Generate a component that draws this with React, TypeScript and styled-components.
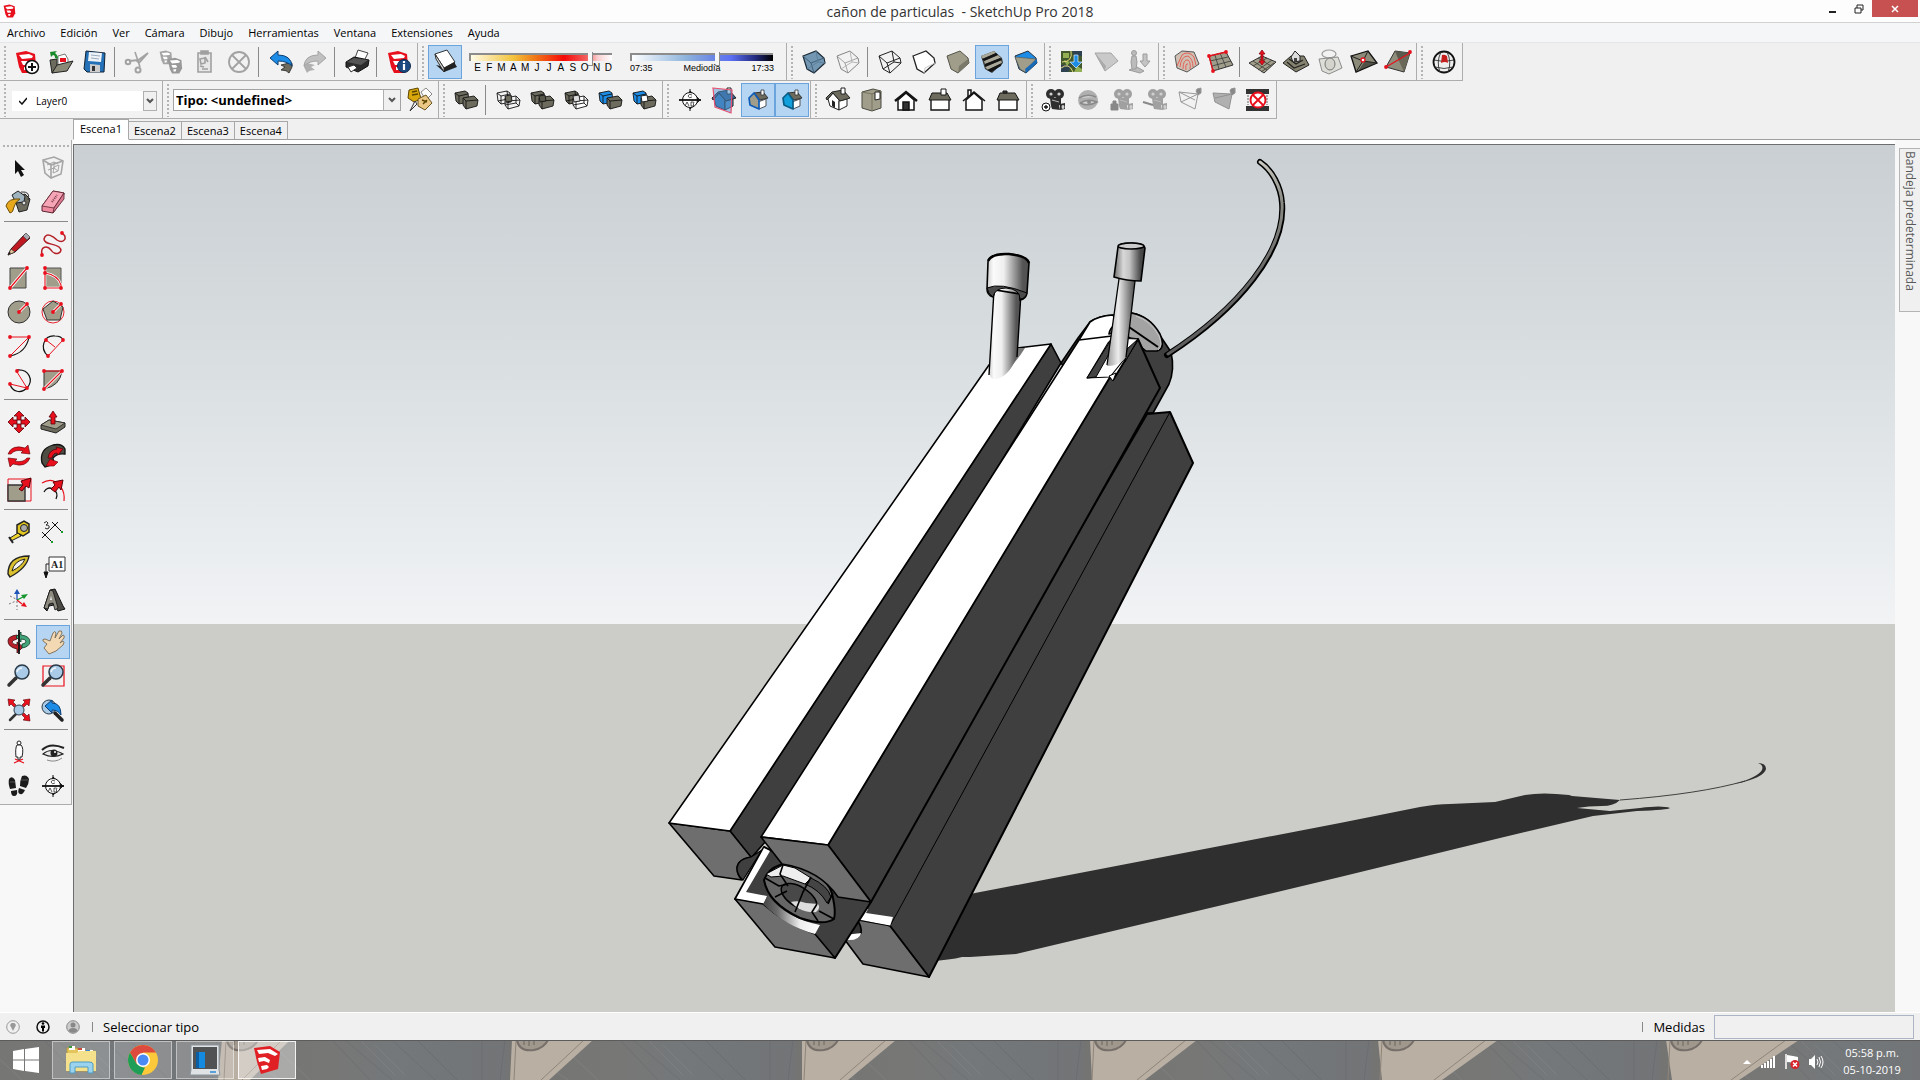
import React from 'react';
import styled, { createGlobalStyle } from 'styled-components';

const UI_FONT = '"Open Sans", "Noto Sans", sans-serif';
const SMALL_FONT = '"Liberation Sans", Arial, sans-serif';
const RED = '#e8101c';
const TAUPE = '#a09e8b';
const OLIVE = '#6c6b5d';
const BLUE = '#1c8ce6';
const INK = '#141414';

const GlobalStyle = createGlobalStyle`
  *, *::before, *::after { box-sizing: border-box; }
  body { margin: 0; background: #f0f0f0; }
  button, input, select { font: inherit; color: inherit; margin: 0; }
`;

const Window = styled.div`
  display: flex;
  flex-direction: column;
  height: 100vh;
  min-height: 960px;
  background: #f0f0f0;
  color: #000;
  font-family: ${UI_FONT};
  font-size: 11px;
`;

/* ---------- title bar and menu ---------- */

const TitleBar = styled.header`
  display: grid;
  grid-template-columns: 1fr auto 1fr;
  align-items: center;
  height: 23px;
  flex: none;
  background: #fdfdfd;
  border-bottom: 1px solid #d2d2d2;
`;

const AppMark = styled.span`
  display: flex;
  padding-left: 3px;
`;

const Title = styled.h1`
  margin: 0;
  padding-top: 2px;
  font-size: 14px;
  line-height: 20px;
  font-weight: 400;
  color: #333;
  white-space: pre;
`;

const WindowControls = styled.div`
  display: flex;
  justify-content: flex-end;
  align-self: start;
  padding-right: 2px;
`;

const WindowButton = styled.button<{ $close?: boolean }>`
  display: flex;
  align-items: center;
  justify-content: center;
  width: ${(p) => (p.$close ? 46 : 26)}px;
  height: 17px;
  padding: 0;
  border: 0;
  color: ${(p) => (p.$close ? '#fff' : '#222')};
  background: ${(p) => (p.$close ? '#c75050' : 'transparent')};
`;

const MenuBar = styled.nav`
  display: flex;
  gap: 1px;
  flex: none;
  height: 20px;
  background: #f4f6f8;
  border-bottom: 1px solid #e6e6e8;
`;

const MenuItem = styled.button`
  padding: 0 7px;
  border: 0;
  background: none;
  line-height: 19px;
`;

/* ---------- toolbars ---------- */

const ToolbarRow = styled.div`
  display: flex;
  flex: none;
  height: 38px;
`;

const Group = styled.div`
  display: flex;
  align-items: flex-start;
  padding: 2px 1px 1px 0;
  border-right: 1px solid #adadad;
  border-bottom: 1px solid #adadad;
  background: #f2f2f2;
`;

const Grip = styled.span`
  align-self: stretch;
  width: 10px;
  background: radial-gradient(circle, #b4b4b4 0 1px, transparent 1px) 3px 0 / 4px 4px repeat-y;
`;

const Divider = styled.span`
  width: 8px;
  height: 30px;
  margin-top: 2px;
  background: linear-gradient(#8a8a8a, #8a8a8a) 2px 0 / 1px 100% no-repeat;
`;

const ToolButton = styled.button<{ $on?: boolean }>`
  display: flex;
  align-items: center;
  justify-content: center;
  width: 34px;
  height: 34px;
  padding: 0;
  border: 1px solid ${(p) => (p.$on ? '#6ba3dc' : 'transparent')};
  background: ${(p) => (p.$on ? '#b5d5f3' : 'transparent')};
`;

const SliderSet = styled.div`
  display: flex;
  gap: 17px;
  padding: 6px 11px 0 7px;
`;

const SliderField = styled.div`
  display: flex;
  flex-direction: column;
  width: 144px;
  font-family: ${SMALL_FONT};
  font-size: 9px;
  line-height: 10px;
`;

const Range = styled.input<{ $track: string }>`
  appearance: none;
  display: block;
  width: 143px;
  height: 12px;
  background: none;
  &::-webkit-slider-runnable-track {
    height: 8px;
    border-top: 2px solid #8c8c8c;
    border-left: 2px solid #8c8c8c;
    background: ${(p) => p.$track};
  }
  &::-webkit-slider-thumb {
    appearance: none;
    width: 5px;
    height: 14px;
    margin-top: -3px;
    background: #f7f7f7;
    border-right: 1px solid #8c8c8c;
    border-bottom: 1px solid #8c8c8c;
  }
`;

const Scale = styled.span<{ $months?: boolean }>`
  display: flex;
  justify-content: space-between;
  padding-left: ${(p) => (p.$months ? 4 : 0)}px;
  font-size: ${(p) => (p.$months ? 10 : 9)}px;
`;

const ScaleMark = styled.span`
  min-width: 9px;
  text-align: center;
`;

const LayerCombo = styled.label`
  display: flex;
  align-items: center;
  width: 145px;
  height: 20px;
  margin: 8px 4px 0 2px;
  background: #fff;
  font-size: 10px;
`;

const CheckMark = styled.svg`
  width: 8px;
  height: 8px;
  margin: 0 7px;
`;

const TypeCombo = styled.label`
  display: flex;
  width: 228px;
  height: 22px;
  margin: 6px 2px 0 0;
  border: 1px solid #a3a3a3;
  background: #fff;
  font-size: 13px;
  font-weight: 700;
`;

const ComboSelect = styled.select`
  appearance: none;
  flex: 1;
  min-width: 0;
  height: 100%;
  padding: 0 2px;
  border: 0;
  background: none;
`;

const ComboArrow = styled.span<{ $wide?: boolean }>`
  display: flex;
  align-items: center;
  justify-content: center;
  width: ${(p) => (p.$wide ? 17 : 14)}px;
  height: 100%;
  background: #f0f0f0;
  border: ${(p) => (p.$wide ? '0' : '1px solid #b0b0b0')};
  border-left: 1px solid #b0b0b0;
`;

/* ---------- scene tabs ---------- */

const SceneTabs = styled.div`
  display: flex;
  align-items: flex-end;
  flex: none;
  height: 21px;
  padding-left: 73px;
  background: linear-gradient(#a0a0a0, #a0a0a0) 73px 20px / 100% 1px no-repeat #f0f0f0;
`;

const SceneTab = styled.button<{ $active?: boolean }>`
  height: ${(p) => (p.$active ? 21 : 19)}px;
  padding: ${(p) => (p.$active ? '0 6px 2px' : '0 5px')};
  border: 1px solid #a8a8a8;
  border-left-width: ${(p) => (p.$active ? 1 : 0)}px;
  border-bottom-color: ${(p) => (p.$active ? '#fff' : '#a0a0a0')};
  background: ${(p) => (p.$active ? '#fff' : '#f0f0f0')};
  line-height: 16px;
`;

/* ---------- body ---------- */

const Body = styled.div`
  display: flex;
  flex: 1;
  min-height: 0;
`;

const LeftColumn = styled.aside`
  flex: none;
  width: 73px;
  background: #f8f8f8;
`;

const Palette = styled.div`
  display: grid;
  grid-template-columns: 34px 34px;
  width: 72px;
  padding: 1px 0 1px 2px;
  background: #f2f2f2;
  border-right: 1px solid #adadad;
  border-bottom: 1px solid #adadad;
`;

const PaletteGrip = styled.span`
  grid-column: 1 / -1;
  height: 10px;
  background: radial-gradient(circle, #b4b4b4 0 1px, transparent 1px) 0 3px / 4px 4px repeat-x;
`;

const PaletteDivider = styled.span`
  grid-column: 1 / -1;
  height: 8px;
  margin: 0 2px;
  background: linear-gradient(#8a8a8a, #8a8a8a) 0 2px / 100% 1px no-repeat;
`;

const Viewport = styled.main`
  display: flex;
  flex: 1;
  min-width: 0;
  border-top: 4px solid #fff;
`;

const Scene = styled.svg`
  flex: 1;
  min-width: 0;
  height: 100%;
  border-top: 1px solid #6e6e6e;
  border-left: 1px solid #6e6e6e;
`;

const RightColumn = styled.aside`
  flex: none;
  width: 25px;
  padding: 8px 0 0 4px;
  background: #f8f8f8;
`;

const TrayTab = styled.button`
  display: flex;
  align-items: center;
  width: 21px;
  height: 164px;
  padding: 2px 0;
  border: 1px solid #b4b4b4;
  border-right: 0;
  background: #f0f0f0;
  writing-mode: vertical-rl;
  font-size: 12px;
  line-height: 17px;
  color: #5a5a5a;
`;

/* ---------- status bar ---------- */

const StatusBar = styled.footer`
  display: flex;
  align-items: center;
  flex: none;
  height: 28px;
  padding: 0 6px;
  border-top: 1px solid #fff;
  background: #f0f0f0;
  font-size: 13px;
`;

const StatusButtons = styled.div`
  display: flex;
  gap: 16px;
  margin-right: 12px;
`;

const StatusButton = styled.button`
  display: flex;
  padding: 0;
  border: 0;
  background: none;
`;

const StatusDivider = styled.span`
  width: 1px;
  height: 10px;
  margin-right: 10px;
  background: #888;
`;

const Hint = styled.span`
  flex: 1;
`;

const Measure = styled.label`
  display: flex;
  align-items: center;
  gap: 9px;
`;

const MeasureInput = styled.input`
  width: 200px;
  height: 24px;
  padding: 0 4px;
  border: 1px solid #abb5c6;
  background: #f0f0f0;
`;

/* ---------- taskbar ---------- */

const Taskbar = styled.div`
  position: relative;
  display: flex;
  flex: none;
  height: 40px;
  background: #737476;
  overflow: hidden;
`;

const TaskbarBackdrop = styled.svg`
  position: absolute;
  inset: 0;
  width: 100%;
  height: 40px;
`;

const StartButton = styled.button`
  position: relative;
  display: flex;
  align-items: center;
  justify-content: center;
  width: 52px;
  padding: 0;
  border: 0;
  background: none;
`;

const TaskList = styled.div`
  position: relative;
  display: flex;
  flex: 1;
  gap: 4px;
  padding: 1px 0;
`;

const TaskButton = styled.button<{ $active?: boolean }>`
  display: flex;
  align-items: center;
  justify-content: center;
  width: 58px;
  height: 38px;
  padding: 0;
  border: 1px solid ${(p) => (p.$active ? 'rgba(255,255,255,.85)' : 'rgba(255,255,255,.45)')};
  background: ${(p) => (p.$active ? 'rgba(255,255,255,.38)' : 'rgba(255,255,255,.18)')};
`;

const Tray = styled.div`
  position: relative;
  display: flex;
  align-items: center;
  gap: 8px;
  padding-top: 3px;
`;

const TrayButton = styled.button`
  display: flex;
  padding: 0;
  border: 0;
  background: none;
`;

const Clock = styled.time`
  position: relative;
  width: 96px;
  padding-top: 4px;
  color: #fff;
  text-align: center;
  line-height: 17px;
`;

/* ---------- icons ---------- */

const Glyph = styled.svg<{ $size?: number }>`
  display: block;
  width: ${(p) => p.$size ?? 24}px;
  height: ${(p) => p.$size ?? 24}px;
  overflow: visible;
`;

const CUBE = 'M1 6 14 1 22 8 23 13 12 23 5 19Z';
const CUBE_EDGES = 'M1 6 9 13 22 8M9 13 12 23';
const HIDDEN_EDGES = 'M14 1 16 12 5 19M16 12 23 13';

const LogoMark = ({ red = RED }: { red?: string }) => (
  <g>
    <path d="M1 3 11 1 20 4 21 16 17 23 7 23 4 17Z" fill={red} />
    <path d="M4 5 14 4 18 6 17 8 7 9ZM6 11 12 11 14 13 13 15 8 15ZM9 17 13 17 12 20 9 20Z" fill="#fff" />
  </g>
);

const Solids = ({ a, b, wire, mid }: { a: string; b: string; wire?: boolean; mid?: string }) => (
  <g stroke={INK} strokeWidth=".9" strokeLinejoin="round">
    <path d="M1 5 11 3 14 5 15 14 5 16 2 13Z" fill={a} />
    <path d="M1 5 5 8 14 6M5 8V16" fill="none" />
    <path d="M9 10 20 8 24 12 23 18 12 21 9 17Z" fill={b} />
    <path d="M9 10 12 13 24 12M12 13V21" fill="none" />
    {wire && <path d="M20 8V15L9 17M20 15 23 18M11 3 12 11 2 13" fill="none" />}
    {mid && <path d="M9 8 15 7 16 13 10 14Z" fill={mid} />}
  </g>
);

const HouseIso = ({ wall, roof = OLIVE, front = '#fff', edge = '#222' }: { wall: string; roof?: string; front?: string; edge?: string }) => (
  <g stroke={edge} strokeWidth="1" strokeLinejoin="round">
    <path d="M2 11 7 5 13 12V22L4 18Z" fill={wall} />
    <path d="M13 13 21 11V18L13 22Z" fill={front} />
    <path d="M6 4 17 2 24 10 14 13 7 5 1 12 0 10Z" fill={roof} />
    <path d="M15 0H19V6L15 6Z" fill="#fff" />
  </g>
);

const HouseSection = ({ wall, outline }: { wall: string; outline: string }) => (
  <g strokeLinejoin="round">
    <path d="M12 14 20 11V18L13 21Z" fill="#fff" stroke="#555" />
    <path d="M8 5 17 4 22 10 14 12Z" fill={OLIVE} stroke="#333" />
    <path d="M15 2H18V7L15 7Z" fill="#fff" stroke="#333" strokeWidth=".8" />
    <path d="M3 10 8 5 13 12V21L4 17Z" fill={wall} stroke={outline} strokeWidth="1.700" />
  </g>
);

const Film = ({ c }: { c: string }) => (
  <g fill={c}>
    <circle cx="9" cy="6" r="5" />
    <circle cx="17" cy="6" r="5" />
    <path d="M8 10 19 10 19 17 9 18ZM9 18 17 17 18 22 10 21ZM18 16 23 15V21L18 22Z" />
    <g fill="#cfcfcf">
      <circle cx="9" cy="6" r="1.600" />
      <circle cx="17" cy="6" r="1.600" />
      <ellipse cx="21" cy="19" rx="1.500" ry="2" />
    </g>
    <path d="M10 12 17 14" stroke="#bbb" />
  </g>
);

const Lens = () => (
  <g>
    <path d="M9 14 2 21" stroke="#333" strokeWidth="3.500" strokeLinecap="round" />
    <circle cx="15" cy="8" r="7" fill="#a9cbe8" stroke="#2b3a48" strokeWidth="1.500" />
    <path d="M10 8Q11 4 15 4" stroke="#eef6fc" strokeWidth="1.500" fill="none" />
  </g>
);

const SectionMark = () => (
  <g stroke="#111" fill="#fff">
    <path d="M12 1V23M22 12 12 3V21Z" fill="#111" />
    <circle cx="12" cy="12" r="7.500" />
    <path d="M1 12H23" strokeWidth="1.800" />
    <path d="M14 7Q11 5 10 8 11 11 14 9M7 18 9 14 11 18M13 14V18H15Q17 17 15 16 17 14 15 14Z" fill="none" strokeWidth=".7" />
  </g>
);

const Handles = ({ at }: { at: [number, number][] }) => (
  <g fill={RED}>
    {at.map(([x, y]) => (
      <circle key={`${x}-${y}`} cx={x} cy={y} r="1.900" />
    ))}
  </g>
);

const icons: Record<string, React.ReactNode> = {
  create: (
    <>
      <LogoMark />
      <circle cx="17" cy="17" r="6.500" fill="#fff" stroke="#111" strokeWidth="1.500" />
      <path d="M17 13V21M13 17H21" stroke="#111" strokeWidth="2" />
    </>
  ),
  open: (
    <>
      <path d="M9 6 16 4 19 9V16H9Z" fill="#fff" stroke="#777" />
      <path d="M11 8H17V12H11Z" fill={RED} />
      <path d="M1 10 8 9V21L3 23Z" fill={OLIVE} stroke="#222" />
      <path d="M3 23 8 15 24 11 18 21Z" fill="#8a8978" stroke="#222" />
      <path d="M1 2 8 1 6 3Q9 5 9 9L6 8Q6 5 4 5L2 7Z" fill="#188a2a" />
    </>
  ),
  save: (
    <>
      <path d="M3 1 22 3 21 22 4 22 1 19Z" fill="#2471b8" stroke="#123" />
      <path d="M6 2 19 3 18 12 5 11Z" fill="#eef3f8" />
      <path d="M7 14 17 15V22H7Z" fill="#ccc" />
      <path d="M9 16H12V21H9Z" fill="#333" />
      <path d="M8 5 17 6M8 8 16 9" stroke="#9ab" />
    </>
  ),
  cut: (
    <g stroke="#a2a2a2" strokeWidth="2" fill="none">
      <path d="M12 11 23 3 14 13ZM10 2 15 17" strokeWidth="1.600" fill="#bbb" />
      <path d="M4 11 14 10" />
      <circle cx="3" cy="12" r="2.300" />
      <circle cx="13" cy="20" r="2.500" />
    </g>
  ),
  copy: (
    <>
      <g transform="scale(.62)">
        <LogoMark red="#a4a4a4" />
      </g>
      <g transform="translate(8 7) scale(.72)">
        <LogoMark red="#999" />
      </g>
    </>
  ),
  paste: (
    <g fill="none" stroke="#a0a0a0" strokeWidth="1.600">
      <path d="M5 3H18V22H5Z" fill="#e8e8e8" />
      <path d="M8 1H15V4H8Z" fill="#a0a0a0" />
      <path d="M7 9 12 8V13L8 14ZM7 16 11 17M9 19H15" />
      <path d="M12 7 15 12" />
    </g>
  ),
  remove: (
    <g fill="none" stroke="#a2a2a2" strokeWidth="1.800">
      <circle cx="12" cy="12" r="10" />
      <path d="M5 5 19 19M19 5 5 19" />
    </g>
  ),
  undo: (
    <>
      <path d="M12 15 20 13Q24 11 23 17L20 23Q18 20 12 20L16 17Z" fill={OLIVE} stroke="#222" strokeWidth=".8" />
      <path d="M1 8 9 1V5Q22 5 23 16Q18 11 9 11V15Z" fill={BLUE} stroke="#0d3f73" />
    </>
  ),
  redo: (
    <>
      <path d="M12 15 4 13Q0 11 1 17L4 23Q6 20 12 20L8 17Z" fill="#b0b0b0" />
      <path d="M23 8 15 1V5Q2 5 1 16Q6 11 15 11V15Z" fill="#c0c0c0" stroke="#a4a4a4" />
    </>
  ),
  print: (
    <>
      <path d="M10 8 13 0 23 3 19 11Z" fill="#fff" stroke="#444" />
      <path d="M1 12 9 7 24 10 23 16 13 22 1 17Z" fill="#2c2c2c" stroke="#111" />
      <path d="M2 12 9 8 23 10 16 15Z" fill="#555" />
      <path d="M3 17 9 15 12 18 6 22Z" fill="#fff" stroke="#333" />
    </>
  ),
  info: (
    <>
      <LogoMark />
      <circle cx="17" cy="16" r="6.500" fill="#1c4a80" stroke="#102a4c" />
      <path d="M17 14V20M17 11V13" stroke="#fff" strokeWidth="2.200" />
    </>
  ),
  shadow: (
    <>
      <path d="M3 15 11 22 24 17 21 12 12 17Z" fill="#222" />
      <path d="M2 4 14 0 22 12 11 18Z" fill="#fff" stroke="#333" />
      <path d="M2 4 3 9 11 22V18Z" fill="#ddd" stroke="#333" />
      <path d="M11 18 22 12V15L11 22Z" fill="#222" />
    </>
  ),
  xray: (
    <g stroke="#1c2a36" strokeWidth="1.200" fill="none">
      <path d={CUBE} fill="#7397b2" />
      <path d={CUBE_EDGES} stroke="#41607a" strokeWidth="1" />
      <path d={HIDDEN_EDGES} stroke="#5c819c" strokeWidth="1" />
    </g>
  ),
  backEdges: (
    <g stroke="#b0b0b0" fill="none" strokeWidth=".9">
      <path d={CUBE} stroke="#777" />
      <path d={CUBE_EDGES} stroke="#999" />
      <path d={HIDDEN_EDGES} />
    </g>
  ),
  wireframe: (
    <g stroke="#222" fill="none">
      <path d={CUBE} />
      <path d={CUBE_EDGES} />
      <path d={HIDDEN_EDGES} />
    </g>
  ),
  hiddenLine: (
    <g stroke="#222" fill="none">
      <path d={CUBE} fill="#fff" strokeWidth="1.300" />
      <path d="M12 23 13 18 23 13" stroke="#ccc" />
    </g>
  ),
  shaded: (
    <>
      <path d={CUBE} fill={TAUPE} stroke="#55544a" />
      <path d="M12 23 13 16 22 9 23 13Z" fill="#7b796a" />
    </>
  ),
  textured: (
    <>
      <path d={CUBE} fill="#3a3a36" />
      <path d="M1 6 14 1 16 3 3 9ZM4 11 18 5 21 8 5 14ZM5 17 21 10 22 13 8 20Z" fill="#aaa898" />
      <path d="M2 9 16 3 18 5 4 11ZM5 14 20 8 22 10 5 17ZM7 20 22 13 21 16 11 22Z" fill={INK} />
    </>
  ),
  mono: (
    <>
      <path d={CUBE} fill={BLUE} stroke="#234" />
      <path d="M1 7 22 9 11 22 6 19Z" fill={TAUPE} stroke="#55544a" strokeWidth=".6" />
      <path d="M23 9V13L12 23 11 19Z" fill="#1a69b4" />
    </>
  ),
  geo: (
    <>
      <path d="M1 1H22V22H1Z" fill="#41592c" />
      <path d="M1 15H12L8 22H1ZM12 1H22V6H14Z" fill="#2e4150" />
      <path d="M3 3H9V8H3ZM4 10 10 12 7 16ZM17 16 22 19V22H14Z" fill="#93b055" />
      <path d="M1 18Q9 12 13 22M11 1Q13 12 2 12" stroke="#e8dc7c" fill="none" />
      <path d="M14 5H18V12H22L16 18 10 12H14Z" fill={BLUE} stroke="#dfefff" strokeWidth=".7" />
    </>
  ),
  terrain: (
    <>
      <path d="M1 3 17 3 24 11 11 21Z" fill="#c9c9c9" stroke="#a6a6a6" />
      <path d="M1 3 11 21 12 16Z" fill="#aaa" />
    </>
  ),
  photo: (
    <g fill="#bbb" stroke="#9c9c9c">
      <path d="M1 20 9 17 16 21 12 23Z" />
      <circle cx="6" cy="3" r="2.500" />
      <path d="M4 6H8L9 12 8 19H4L3 12Z" />
      <path d="M15 4H19V11H22L17 17 12 11H15Z" fill="#c4c4c4" />
    </g>
  ),
  contours: (
    <>
      <path d="M1 6 8 1 20 2 25 14 13 22 3 18Z" fill="#cfc0b4" stroke="#555" />
      <path d="M3 16 8 5Q14 0 20 7L22 15M6 17Q7 6 14 6Q19 9 19 17M9 19Q9 9 14 10Q17 12 16 19M12 20Q11 13 14 14" stroke="#e5564c" fill="none" strokeWidth=".9" />
    </>
  ),
  scratch: (
    <>
      <path d="M1 6 18 2 25 15 5 21Z" fill={TAUPE} stroke="#333" />
      <path d="M2 11 20 7M4 16 23 11M7 5 11 19M12 3 18 17" stroke="#444" strokeWidth=".9" />
      <path d="M5 21 1 6 18 2" stroke={RED} strokeWidth="1.300" fill="none" />
      <Handles at={[[1, 6], [18, 2], [5, 21]]} />
    </>
  ),
  smoove: (
    <>
      <path d="M-1 13 12 6 26 12 14 23Z" fill={TAUPE} stroke="#333" />
      <path d="M3 11 17 20M8 8 21 16M3 16 17 8M8 20 22 10M11 22 24 13" stroke="#3c3b34" strokeWidth=".8" />
      <path d="M12 0 15 4H13V11H15L12 15 9 11H11V4H9Z" fill={RED} stroke="#80000a" strokeWidth=".7" />
    </>
  ),
  stamp: (
    <>
      <path d="M-1 13 7 6 20 6 25 15 12 22Z" fill="#85836f" stroke="#222" />
      <path d="M3 12 10 18 21 14M5 9 12 14 19 10" stroke="#222" fill="none" strokeWidth="1.200" />
      <path d="M7 7 11 1 16 6V11L9 12Z" fill="#ddd" stroke="#222" />
      <path d="M10 8H13V11L10 12Z" fill="#444" />
    </>
  ),
  drape: (
    <g stroke="#8c8c8c">
      <path d="M1 9 20 7 24 18 11 24 4 21Z" fill="#deded8" />
      <ellipse cx="11" cy="4" rx="7" ry="4" fill="none" stroke="#999" strokeWidth="1.200" />
      <ellipse cx="12" cy="14" rx="5" ry="6" fill="#d4d4cd" stroke="#777" />
    </g>
  ),
  detail: (
    <>
      <path d="M-1 6 16 1 25 13 4 22Z" fill="#8c8a78" stroke="#111" strokeWidth="1.300" />
      <path d="M-1 6 11 11 16 1M25 13 11 11 4 22" stroke="#222" fill="none" />
      <path d="M13 11 25 13 6 21Z" fill="#2c2b26" opacity=".6" />
      <circle cx="11" cy="10" r="2" fill="#fff" stroke={RED} strokeWidth="1.300" />
    </>
  ),
  flip: (
    <>
      <path d="M9 1 24 3 18 22 0 17Z" fill="#8f8d7b" stroke="#333" />
      <path d="M9 1 24 3 13 11Z" fill="#5b5a4e" />
      <path d="M24 3 18 22 13 11Z" fill="#6a6859" />
      <path d="M0 17 24 3" stroke={RED} strokeWidth="1.200" />
      <Handles at={[[0, 17], [24, 2]]} />
    </>
  ),
  globe: (
    <>
      <circle cx="12" cy="12" r="10.500" fill="#eee" stroke="#111" strokeWidth="1.800" />
      <path d="M2 10Q12 13 22 10M3 17Q12 20 21 17M9 2Q4 12 8 22M15 2Q20 12 16 22" stroke="#333" fill="none" strokeWidth=".9" />
      <path d="M10 5Q12 4 15 6L16 13Q13 11 9 13Z" fill="#c71c1c" />
    </>
  ),
  tags: (
    <>
      <path d="M1 2 10 0 13 11 6 14 0 10Z" fill="#d8a80c" stroke="#5b4500" />
      <path d="M13 4 18 0 24 6 18 12Z" fill="#fff" stroke="#888" />
      <path d="M10 11 18 7 24 15 17 22 10 18Z" fill="#ecc886" stroke="#6a5420" />
      <path d="M4 4 9 3M4 7 10 6M14 12 19 14M15 16 19 12" stroke="#5b4500" strokeWidth="1.500" />
      <path d="M2 23 7 13 9 16Z" fill="#eee" stroke="#333" />
    </>
  ),
  shell: <Solids a={OLIVE} b={OLIVE} />,
  intersect: <Solids a="none" b="none" wire mid={OLIVE} />,
  union: <Solids a={OLIVE} b={OLIVE} mid="#57564b" />,
  subtract: <Solids a={OLIVE} b="#fff" wire mid="#ddd" />,
  trim: <Solids a={BLUE} b={OLIVE} />,
  split: <Solids a={BLUE} b={OLIVE} mid="#fff" />,
  section: <SectionMark />,
  sectionPlane: (
    <>
      <HouseIso wall="#3a76b5" roof="#345f8c" front="#5792c9" />
      <path d="M1 0 20 2 19 25 3 19Z" fill="#4a8fd0" fillOpacity=".5" stroke="#e85070" strokeWidth="1.200" />
    </>
  ),
  sectionCut: <HouseSection wall={TAUPE} outline="#0e5cb8" />,
  sectionFill: <HouseSection wall="#12a0dc" outline="#0b5c84" />,
  iso: (
    <>
      <HouseIso wall="#fff" />
      <path d="M6 12 9 14V20L6 18Z" fill="#222" />
    </>
  ),
  top: (
    <>
      <path d="M2 4 13 1 21 3V20L12 23 2 20Z" fill={TAUPE} stroke="#4b4a40" />
      <path d="M12 5V23M2 4 12 6 21 3" stroke="#77755f" fill="none" />
      <path d="M15 4H20V11L15 12Z" fill="#fff" stroke="#222" />
    </>
  ),
  front: (
    <g stroke={INK} strokeWidth="1.500">
      <path d="M4 12V22H20V12L12 5Z" fill="#fff" />
      <path d="M1 13 12 4 23 13" fill="none" strokeWidth="2.400" />
      <path d="M9 14H15V22H9Z" fill="#333" />
    </g>
  ),
  right: (
    <g stroke={INK}>
      <path d="M3 11H21V22H3Z" fill="#fff" strokeWidth="1.400" />
      <path d="M4 5H19L23 12H1Z" fill={OLIVE} />
      <path d="M13 1H18V7H13Z" fill="#fff" />
    </g>
  ),
  back: (
    <g stroke={INK} strokeWidth="1.500" fill="#fff">
      <path d="M6 9V2H9V7" />
      <path d="M4 12V22H20V12L12 5Z" />
      <path d="M1 13 12 4 23 13" fill="none" />
    </g>
  ),
  left: (
    <g stroke={INK}>
      <path d="M3 11H21V22H3Z" fill="#fff" strokeWidth="1.400" />
      <path d="M4 5H19L23 12H1Z" fill={OLIVE} />
      <path d="M7 3H11V5H7Z" fill="#444" />
    </g>
  ),
  camAdd: (
    <>
      <Film c="#2e2e2e" />
      <circle cx="4" cy="19" r="4" fill="#fff" stroke="#111" />
      <path d="M4 17V21M2 19H6" stroke="#111" strokeWidth="1.300" />
    </>
  ),
  camLook: (
    <>
      <circle cx="12" cy="12" r="10" fill="#b0b0b0" />
      <path d="M3 10Q11 5 20 9M4 15Q12 10 21 14Q12 19 4 15" stroke="#8a8a8a" strokeWidth="1.500" fill="#d0d0d0" />
      <circle cx="13" cy="14" r="2" fill="#8a8a8a" />
    </>
  ),
  camLock: (
    <>
      <Film c="#a0a0a0" />
      <path d="M1 16H8V22H1ZM3 16V13H6V16" fill="#888" stroke="#888" />
    </>
  ),
  camAll: (
    <>
      <Film c="#a0a0a0" />
      <path d="M-1 14 9 17" stroke="#888" strokeWidth="2" />
    </>
  ),
  frustumLine: (
    <g stroke="#999" fill="none">
      <path d="M1 4 20 6 17 21 3 14ZM3 14 20 6M1 4 17 12" />
      <path d="M18 3 19 1 23 0V5L20 7Z" fill="#888" />
    </g>
  ),
  frustumFill: (
    <g stroke="#929292">
      <path d="M1 5 20 6 17 21 3 14Z" fill="#b0b0b0" />
      <path d="M3 10 20 6" />
      <path d="M18 3 19 1 23 0V5L20 7Z" fill="#888" />
    </g>
  ),
  camStop: (
    <>
      <path d="M0 1H23V6H0ZM0 18H23V23H0Z" fill="#333" />
      <path d="M2 7V17M21 7V17" stroke="#666" strokeDasharray="2 1" />
      <circle cx="12" cy="12" r="7.500" fill="#fff" stroke={RED} strokeWidth="1.900" />
      <path d="M7 7 17 17M17 7 7 17" stroke={RED} strokeWidth="1.900" />
    </>
  ),

  select: <path d="M8 4V18L11 15 14 21 17 19 14 14H18Z" fill="#111" />,
  component: (
    <g stroke="#a6a6a6" strokeWidth="1.600" fill="none">
      <path d="M2 4 13 1 22 5 20 18 10 22 4 17ZM2 4 10 9 22 5M10 9 10 22" />
      <path d="M6 9 13 6 17 8M7 14 13 12 17 15M13 6V13M13 11 18 9 17 15 12 17Z" strokeWidth="1" />
    </g>
  ),
  paint: (
    <>
      <path d="M7 7 18 4 23 9 20 20 12 22Z" fill={OLIVE} stroke="#222" />
      <path d="M5 5 11 1 18 6 17 12 9 13Z" fill="#9fb3bf" stroke="#222" />
      <path d="M14 2Q24 1 21 10" fill="none" stroke="#333" />
      <circle cx="17" cy="13" r="2" fill="#ddd" stroke="#333" />
      <path d="M-1 16Q1 8 13 9Q8 12 7 17Q6 23 3 23Z" fill="#e8a81c" stroke="#6c4d08" />
    </>
  ),
  eraser: (
    <>
      <path d="M1 16 12 1 23 3 22 9 12 23 1 21Z" fill="#ef8ba0" stroke="#5a2430" />
      <path d="M1 16 12 1 23 3 13 18Z" fill="#f5a5b5" stroke="#5a2430" strokeWidth=".8" />
      <path d="M13 18 23 3V9L12 23Z" fill="#d8798f" stroke="#5a2430" strokeWidth=".8" />
      <path d="M11 12 16 5" stroke="#7d3c4b" strokeWidth="2" strokeDasharray="1 1" />
    </>
  ),
  pencil: (
    <>
      <path d="M1 23 4 17 18 2 23 6 8 20Z" fill="#c01820" stroke="#401014" />
      <path d="M1 23 4 17 8 20Z" fill="#e5c79c" stroke="#333" strokeWidth=".7" />
      <path d="M1 23 2 20 4 21Z" fill="#111" />
      <path d="M16 4 19 1 23 5 20 8Z" fill="#a9a9b2" stroke="#444" strokeWidth=".7" />
    </>
  ),
  freehand: (
    <>
      <path d="M1 23C-1 13 7 14 10 18C14 25 24 20 18 15C13 11 3 13 3 7C5-1 13 5 16 8C22 12 28 6 21 1" stroke="#b52028" strokeWidth="1.500" fill="none" />
      <Handles at={[[1, 23], [21, 1]]} />
    </>
  ),
  line: (
    <>
      <path d="M3 2H19V22H3Z" fill={TAUPE} stroke="#444" />
      <path d="M3 22 20 2" stroke="#fff" strokeWidth="3" />
      <path d="M3 22 20 2" stroke={RED} strokeWidth="1.200" />
      <Handles at={[[3, 22], [20, 2]]} />
    </>
  ),
  rect: (
    <>
      <path d="M4 2H20V22H4Z" fill={TAUPE} stroke="#555" />
      <path d="M4 2V22H20V19Q17 9 4 7" stroke="#fff" strokeWidth="2.500" fill="none" />
      <path d="M4 2V22H20V19Q17 9 4 7" stroke={RED} strokeWidth="1.100" fill="none" />
      <Handles at={[[4, 2], [4, 7], [4, 22], [20, 22]]} />
    </>
  ),
  circle: (
    <>
      <circle cx="12" cy="12" r="11" fill={TAUPE} stroke="#333" />
      <path d="M12 12 20 4" stroke="#fff" strokeWidth="3" />
      <path d="M12 12 20 4" stroke={RED} strokeWidth="1.300" />
      <Handles at={[[12, 12], [20, 4]]} />
    </>
  ),
  polygon: (
    <>
      <circle cx="12" cy="12" r="11" fill="none" stroke={RED} strokeWidth=".9" />
      <path d="M2 9 12 1 22 7 19 20 6 20Z" fill={TAUPE} stroke="#333" />
      <path d="M12 12 20 4" stroke="#fff" strokeWidth="3" />
      <path d="M12 12 20 4" stroke={RED} strokeWidth="1.300" />
      <Handles at={[[12, 12], [20, 4]]} />
    </>
  ),
  arc: (
    <>
      <path d="M3 22Q19 19 22 3" fill="none" stroke="#111" strokeWidth="1.200" />
      <path d="M22 3H3M3 22 22 3" stroke={RED} />
      <Handles at={[[3, 3], [22, 3], [3, 22]]} />
    </>
  ),
  arc2: (
    <>
      <path d="M7 22C-2 14 3 1 14 2C18 2 21 3 22 6" fill="none" stroke="#111" strokeWidth="1.200" />
      <path d="M7 22 22 6M5 6 14 13" stroke={RED} />
      <Handles at={[[7, 22], [22, 6], [5, 6]]} />
    </>
  ),
  arc3: (
    <>
      <path d="M10 2C22 1 27 12 20 20C14 26 5 24 3 16" fill="none" stroke="#111" strokeWidth="1.200" />
      <path d="M10 4 20 20 3 16" stroke={RED} fill="none" />
      <Handles at={[[10, 3], [20, 20], [3, 16]]} />
    </>
  ),
  pie: (
    <>
      <path d="M3 3H21Q19 18 3 21Z" fill={TAUPE} stroke="#333" />
      <path d="M3 21 21 3" stroke="#fff" strokeWidth="3" />
      <path d="M3 3H21L3 21" stroke={RED} strokeWidth="1.100" fill="none" />
      <Handles at={[[3, 3], [21, 3], [3, 21]]} />
    </>
  ),
  move: (
    <g fill={RED} stroke="#5c0008" strokeWidth=".8">
      {[0, 90, 180, 270].map((a) => (
        <path key={a} d="M12 1 17 6H14V10H10V6H7Z" transform={`rotate(${a} 12 12)`} />
      ))}
    </g>
  ),
  push: (
    <>
      <path d="M0 15 8 10 24 13 24 17 15 23 0 19Z" fill={OLIVE} stroke="#222" />
      <path d="M0 15 8 10 24 13 15 19Z" fill={TAUPE} stroke="#222" strokeWidth=".8" />
      <path d="M12 1 16 7H14V14H10V7H8Z" fill={RED} stroke="#5c0008" strokeWidth=".8" />
    </>
  ),
  rotate: (
    <g fill={RED} stroke="#5c0008" strokeWidth=".6">
      <path d="M1 10Q5 0 18 4L21 1 23 10 14 9 16 7Q8 5 4 10Z" />
      <path d="M23 14Q19 24 6 20L3 23 1 14 10 15 8 17Q16 19 20 14Z" />
    </g>
  ),
  follow: (
    <>
      <path d="M1 19Q-2 5 12 1Q21-1 24 5V10Q16 9 12 14L13 20 4 23Z" fill="#4e4d44" stroke="#111" strokeWidth="1.300" />
      <path d="M7 14Q8 6 16 5L15 3 22 5 17 11 16 9Q12 9 11 14Z" fill={RED} stroke="#5c0008" strokeWidth=".8" />
      <path d="M5 22 9 15 17 18 13 22Z" fill={RED} stroke="#5c0008" strokeWidth=".6" />
    </>
  ),
  scale: (
    <>
      <path d="M1 1H24V23H1Z" fill="none" stroke={RED} />
      <path d="M1 7H18V23H1Z" fill={TAUPE} stroke="#333" strokeWidth="1.400" />
      <path d="M12 11 16 7 14 3 24 0 22 10 19 8 15 13Z" fill={RED} stroke="#5c0008" />
    </>
  ),
  offset: (
    <>
      <path d="M1 5Q12-2 20 9 24 15 23 23" fill="none" stroke={RED} strokeWidth="1.200" />
      <path d="M3 14Q6 8 12 11 18 15 15 21" fill="none" stroke="#111" strokeWidth="1.300" />
      <path d="M10 11 14 7 12 4 22 2 20 12 18 9 14 14Z" fill={RED} stroke="#5c0008" />
    </>
  ),
  tape: (
    <>
      <path d="M10 5 17 1 22 4 22 12 16 16 10 13Z" fill="#e2c720" stroke="#222" strokeWidth="1.500" />
      <circle cx="17" cy="8" r="3.500" fill="#aaa" stroke="#222" />
      <path d="M11 13 3 18 4 21 14 16Z" fill="#f0d530" stroke="#222" />
      <path d="M2 17 6 23" stroke="#222" strokeWidth="2" />
    </>
  ),
  dimension: (
    <g stroke="#111" fill="none">
      <path d="M4 15 14 5M1 12 7 18M11 2 17 8M1 18 7 12M11 8 17 2M4 15 11 22M14 5 21 12" />
      <path d="M3 3Q6 0 7 3Q6 5 5 5Q9 5 8 8Q6 10 4 8" strokeWidth=".9" />
      <path d="M10 22H12M20 12H22" stroke="#1b9a2c" strokeWidth="2" />
    </g>
  ),
  protractor: (
    <>
      <path d="M1 20Q1 2 22 2Q20 14 3 23Z" fill="#d9c02c" stroke="#222" strokeWidth="1.400" />
      <path d="M5 17Q7 7 18 5Q15 12 5 17Z" fill="#f3f3f3" stroke="#222" />
    </>
  ),
  axes: (
    <g strokeWidth="1.300">
      <path d="M10 12V4" stroke="#1c55b8" />
      <path d="M10 1 13 6H7Z" fill="#1c55b8" />
      <path d="M10 12 16 9" stroke="#18962e" />
      <path d="M21 6 17 11 14 7Z" fill="#18962e" />
      <path d="M10 12 15 16" stroke={RED} />
      <path d="M20 19 14 18 17 14Z" fill={RED} />
      <path d="M10 13V22M2 16 9 13M3 8 9 11" stroke="#777" strokeDasharray="2 2" strokeWidth="1" />
    </g>
  ),
  text3d: (
    <>
      <path d="M3 20 9 2 14 1 22 18 24 21 17 23 13 17 8 18 6 23Z" fill="#4b4a44" stroke="#111" />
      <path d="M3 20 9 2 12 3 17 20 14 22 12 15 8 16 7 21Z" fill="#8d8b80" stroke="#111" strokeWidth=".8" />
      <path d="M9 12 10 8 11 12Z" fill="#eee" />
    </>
  ),
  orbit: (
    <>
      <path d="M10 5Q1 6 1 11Q1 17 10 19V23L16 17 10 12V15Q5 14 5 12Q6 10 10 9Z" fill="#b9202a" stroke="#3f0a0e" strokeWidth=".8" />
      <path d="M14 5Q23 6 23 12Q22 17 15 18V14Q19 14 19 11 18 9 14 9V12L9 7 14 2Z" fill="#42a478" stroke="#0d3b26" strokeWidth=".8" />
      <path d="M12 0V24" stroke="#111" strokeWidth="1.800" />
    </>
  ),
  pan: (
    <path d="M3 18 6 14 2 11Q1 9 4 9L9 11 12 3Q14 0 15 3L14 8 18 1Q21 0 21 3L18 9 22 5Q24 5 23 8L19 13 22 11Q24 12 22 15L15 21 8 24Z" fill="#f2d9b4" stroke="#7b6a52" strokeWidth=".9" />
  ),
  zoom: <Lens />,
  zoomWindow: (
    <>
      <path d="M2 2H23V22H2Z" fill="none" stroke={RED} strokeWidth="1.200" />
      <Lens />
    </>
  ),
  zoomExtents: (
    <>
      <path d="M9 16 3 22" stroke="#333" strokeWidth="2.500" strokeLinecap="round" />
      <g fill={RED} stroke="#5c0008" strokeWidth=".6">
        <path d="M1 1 8 2 6 4 9 7 7 9 4 6 2 8ZM23 1 16 2 18 4 15 7 17 9 20 6 22 8ZM23 23 16 22 18 20 15 17 17 15 20 18 22 16Z" />
      </g>
      <circle cx="12" cy="12" r="5" fill="#a9cbe8" stroke="#2b3a48" />
    </>
  ),
  previous: (
    <>
      <path d="M14 15 21 22" stroke="#222" strokeWidth="3.500" strokeLinecap="round" />
      <circle cx="8" cy="9" r="7" fill="#a9cbe8" stroke="#2b3a48" />
      <path d="M4 8 11 2V5Q20 5 20 17Q17 12 11 12V15Z" fill={BLUE} stroke="#0d3f73" />
    </>
  ),
  position: (
    <>
      <circle cx="12" cy="3" r="2" fill="#fff" stroke="#222" />
      <path d="M10 5Q8 8 9 17H11V20H13V17H15Q17 8 14 5Z" fill="#fff" stroke="#222" />
      <path d="M7 23 16 19M8 19 17 23" stroke={RED} strokeWidth="1.200" />
    </>
  ),
  look: (
    <>
      <path d="M1 10Q9 2 23 8" stroke="#222" strokeWidth="2" fill="none" />
      <path d="M2 14Q10 7 22 14Q12 19 2 14Z" fill="#e8e8e8" stroke="#222" strokeWidth="1.200" />
      <circle cx="13" cy="13" r="3.500" fill="#222" />
      <circle cx="14" cy="12" r="1" fill="#fff" />
      <path d="M6 20Q14 23 21 18" stroke="#888" fill="none" />
    </>
  ),
  walk: (
    <g fill="#1c1c1c">
      <path d="M2 5Q5 1 8 6L9 14 3 15Q1 9 2 5ZM4 17 10 16Q11 22 7 22Q4 22 4 17ZM15 2Q20 0 22 5Q22 10 19 14L13 12Q13 6 15 2ZM12 14 18 16Q16 21 13 20Q10 19 12 14Z" />
      <path d="M3 8H8M14 6H21" stroke="#555" />
    </g>
  ),
  text: (
    <>
      <path d="M8 3H24V17H8Z" fill="#fff" stroke="#333" />
      <text x="10" y="14" fontFamily="Liberation Serif, serif" fontSize="10" fontWeight="700" fill="#222">A1</text>
      <path d="M8 10H5V19" fill="none" stroke="#222" />
      <path d="M5 24 3 18H7Z" fill="#111" stroke="#111" />
    </>
  ),
};

type Item = { id: string; label: string; on?: boolean } | '|';
const t = (id: string, label: string, on = false): Item => ({ id, label, on });

const Tools = ({ items }: { items: Item[] }) => (
  <>
    {items.map((item, i) =>
      item === '|' ? (
        <Divider key={i} />
      ) : (
        <ToolButton key={item.id} $on={item.on} aria-label={item.label} aria-pressed={item.on}>
          <Glyph viewBox="0 0 24 24" aria-hidden>{icons[item.id]}</Glyph>
        </ToolButton>
      ),
    )}
  </>
);

const standard: Item[] = [
  t('create', 'Nuevo'), t('open', 'Abrir'), t('save', 'Guardar'), '|',
  t('cut', 'Cortar'), t('copy', 'Copiar'), t('paste', 'Pegar'), t('remove', 'Borrar'), '|',
  t('undo', 'Deshacer'), t('redo', 'Rehacer'), '|',
  t('print', 'Imprimir'), '|', t('info', 'Información del modelo'),
];
const styles: Item[] = [
  t('xray', 'Rayos X'), t('backEdges', 'Aristas posteriores'), '|',
  t('wireframe', 'Alambre'), t('hiddenLine', 'Líneas ocultas'), t('shaded', 'Sombreado'),
  t('textured', 'Sombreado con texturas', true), t('mono', 'Monocromo'),
];
const location: Item[] = [t('geo', 'Añadir ubicación'), t('terrain', 'Activar terreno'), t('photo', 'Texturas fotográficas')];
const sandbox: Item[] = [
  t('contours', 'Desde contornos'), t('scratch', 'Desde cero'), '|',
  t('smoove', 'Esculpir'), t('stamp', 'Estampar'), t('drape', 'Proyectar'), t('detail', 'Añadir detalle'), t('flip', 'Voltear arista'),
];
const solids: Item[] = [
  t('shell', 'Carcasa exterior'), '|', t('intersect', 'Intersecar'), t('union', 'Unir'),
  t('subtract', 'Sustraer'), t('trim', 'Recortar'), t('split', 'Dividir'),
];
const sections: Item[] = [
  t('section', 'Plano de sección'), t('sectionPlane', 'Mostrar planos'),
  t('sectionCut', 'Mostrar cortes', true), t('sectionFill', 'Mostrar relleno', true),
];
const views: Item[] = [
  t('iso', 'Isométrica'), t('top', 'Planta'), t('front', 'Frente'),
  t('right', 'Derecha'), t('back', 'Detrás'), t('left', 'Izquierda'),
];
const cameras: Item[] = [
  t('camAdd', 'Crear cámara'), t('camLook', 'Mirar por cámara'), t('camLock', 'Bloquear cámara'), t('camAll', 'Mostrar cámaras'),
  t('frustumLine', 'Líneas de campo'), t('frustumFill', 'Volumen de campo'), t('camStop', 'Restablecer cámara'),
];

const paletteSections: Item[][] = [
  [t('select', 'Seleccionar'), t('component', 'Crear componente'), t('paint', 'Pintar'), t('eraser', 'Borrador')],
  [
    t('pencil', 'Línea'), t('freehand', 'Mano alzada'), t('line', 'Rectángulo'), t('rect', 'Rectángulo girado'),
    t('circle', 'Círculo'), t('polygon', 'Polígono'), t('arc', 'Arco'), t('arc2', 'Arco por 2 puntos'),
    t('arc3', 'Arco por 3 puntos'), t('pie', 'Sector'),
  ],
  [t('move', 'Mover'), t('push', 'Empujar'), t('rotate', 'Rotar'), t('follow', 'Sígueme'), t('scale', 'Escala'), t('offset', 'Equidistancia')],
  [t('tape', 'Medir'), t('dimension', 'Acotación'), t('protractor', 'Transportador'), t('text', 'Texto'), t('axes', 'Ejes'), t('text3d', 'Texto 3D')],
  [t('orbit', 'Orbitar'), t('pan', 'Desplazar', true), t('zoom', 'Zoom'), t('zoomWindow', 'Ventana de zoom'), t('zoomExtents', 'Ver modelo centrado'), t('previous', 'Anterior')],
  [t('position', 'Situar cámara'), t('look', 'Girar'), t('walk', 'Caminar'), t('section', 'Plano de sección')],
];

const Chevron = () => (
  <Glyph $size={8} viewBox="0 0 8 8" aria-hidden>
    <path d="M1 2 4 5 7 2" fill="none" stroke="#555" strokeWidth="2" />
  </Glyph>
);

/* ---------- 3D scene ---------- */

const Model = () => (
  <Scene viewBox="74 145 1821 867" preserveAspectRatio="xMidYMid slice" role="img" aria-label="Modelo 3D">
    <defs>
      <linearGradient id="sky" x1="0" y1="0" x2="0" y2="1">
        <stop offset="0" stopColor="#c9cfd3" />
        <stop offset=".5" stopColor="#dbe0e2" />
        <stop offset="1" stopColor="#f1f3f5" />
      </linearGradient>
      <linearGradient id="metal" x1="0" y1="0" x2="1" y2="0">
        <stop offset="0" stopColor="#cfcfcf" />
        <stop offset=".15" stopColor="#fafafa" />
        <stop offset=".4" stopColor="#efefef" />
        <stop offset=".85" stopColor="#555" />
        <stop offset="1" stopColor="#505050" />
      </linearGradient>
      <linearGradient id="thin" x1="0" y1="0" x2="1" y2="0">
        <stop offset="0" stopColor="#6f6f6f" />
        <stop offset=".3" stopColor="#d8d8d8" />
        <stop offset=".5" stopColor="#c4c4c4" />
        <stop offset=".85" stopColor="#4a4a4a" />
        <stop offset="1" stopColor="#3e3e3e" />
      </linearGradient>
      <linearGradient id="thinShaft" x1="0" y1="0" x2="1" y2="0">
        <stop offset="0" stopColor="#9a9a9a" />
        <stop offset=".4" stopColor="#ededed" />
        <stop offset=".7" stopColor="#9c9c9c" />
        <stop offset="1" stopColor="#4a4a4a" />
      </linearGradient>
      <linearGradient id="bore" x1="0" y1="0" x2="1" y2="0">
        <stop offset="0" stopColor="#444" />
        <stop offset=".25" stopColor="#6a6a6a" />
        <stop offset=".65" stopColor="#eee" />
        <stop offset="1" stopColor="#fff" />
      </linearGradient>
      <linearGradient id="cable" x1="0" y1="1" x2="0" y2="0">
        <stop offset="0" stopColor="#5d5d5d" />
        <stop offset=".4" stopColor="#666" />
        <stop offset=".8" stopColor="#8b8b86" />
        <stop offset="1" stopColor="#c8c8c0" />
      </linearGradient>
    </defs>
    <rect x="-400" y="144" width="2800" height="480" fill="url(#sky)" />
    <rect x="-400" y="624" width="2800" height="800" fill="#cccdc8" />

    <path
      fill="#2f2f2f"
      d="M960 897 975 893 1340 823 1420 807Q1437 804 1450 804L1495 802 1525 795Q1542 792 1569 795L1572 796 1620 800Q1614 806 1602 806 1588 806 1577 808L1610 811 1640 808Q1662 805 1670 808 1668 810 1637 811L1593 816 1500 838 1340 877 1016 954 970 957 962 957Q950 960 930 961Z"
    />
    <path d="M1620 800Q1700 794 1745 781" fill="none" stroke="#2f2f2f" strokeWidth=".9" />
    <path d="M1735 784Q1758 777 1762 770 1764 765 1758 763 1766 763 1766 769 1764 778 1735 784Z" fill="#2f2f2f" />

    <g stroke="#000" strokeWidth="1.600" strokeLinejoin="round">
      {/* rear tube */}
      <path d="M1061 363 1078 338 1090 322Q1098 316 1113 315L1132 313Q1150 316 1161 337L1171 352Q1175 370 1169 384L1153 413H1100Z" fill="#3f3f3f" />
      <path d="M1066 363 1079 340 1090 322Q1098 316 1113 315L1120 330 1110 340Z" fill="#fff" />
      <path d="M1131 313Q1150 316 1160 334 1166 348 1157 351L1146 351 1120 330 1109 334Q1110 328 1114 326Z" fill="#a3a3a3" />
      <path d="M1136 316Q1151 321 1159 336 1163 346 1158 350" fill="none" stroke="#c8c8c8" strokeWidth="1" />
      <path d="M1129 327 1158 347" fill="none" strokeWidth="2" />

      {/* cable */}
      <path d="M1167 355C1240 308 1286 250 1282 203 1281 187 1272 170 1260 162" fill="none" strokeWidth="6" strokeLinecap="round" />
      <path d="M1168 354C1240 307 1285 250 1282 203 1281 187 1272 170 1260 162" fill="none" stroke="url(#cable)" strokeWidth="3" strokeLinecap="round" />

      {/* right bar */}
      <path d="M1147 414 1170 412 1193 463 929 977 890 926 858 912Z" fill="#3f3f3f" strokeWidth="2" />
      <path d="M890 926 1170 412" strokeWidth="1" fill="none" />
      <path d="M845 940 858 912 890 926 929 977 863 964Z" fill="#6e6e6e" />
      <path d="M862 905 868 909 866 913 893 917 890 926 857 919Z" fill="#fff" stroke="none" />
      <path d="M857 920Q862 926 861 933L845 940Z" fill="#333" />
      <path d="M845 935 861 933Q859 941 847 940Z" fill="#fff" stroke="none" />
      <path d="M857 920 890 926" strokeWidth="1" />

      {/* left bar */}
      <path d="M1051 344 1061 363 780 825 751 858 730 831Z" fill="#3f3f3f" />
      <path d="M669 823 730 831 751 857Q738 859 737 868 737 875 742 880L714 876Z" fill="#6e6e6e" />
      <path d="M751 857Q738 859 737 868 737 875 743 880L762 850Z" fill="#3f3f3f" strokeWidth="1.200" />
      <path d="M669 823 989 365 1017 348 1051 344 730 831Z" fill="#fff" />
      <path d="M1017 348 1025 348Q1017 361 1009 368L1014 362Z" fill="#777" stroke="none" />

      {/* lower bar */}
      <path d="M735 899 764 847 838 885 871 902 835 958Z" fill="#3f3f3f" strokeWidth="2" />
      <path d="M736 899 764 848 770 851 746 892 767 896 764 904Z" fill="#fff" stroke="none" />
      <path d="M735 899 763 904Q785 924 815 934L835 958 775 947Z" fill="#6e6e6e" />
      <path d="M763 904 768 895Q785 918 820 925L815 934Q785 926 763 904Z" fill="url(#bore)" stroke="none" />
      <path d="M764 880Q768 869 780 865L792 863Q830 875 833 898 836 912 834 919 824 926 800 918 768 903 764 880Z" fill="#666" strokeWidth="2" />
      <path d="M766 874 783 865 795 868 811 878 805 884 783 876 771 877Z" fill="#eee" strokeWidth="1" />
      <path d="M811 878Q828 886 831 897L827 903Q820 890 805 884Z" fill="#444" strokeWidth="1" />
      <ellipse cx="799" cy="897" rx="20" ry="10" transform="rotate(32 799 897)" fill="#484848" strokeWidth="1.500" />
      <path d="M791 902Q798 900 806 903L818 904Q821 908 816 912 803 913 795 906Z" fill="#ddd" stroke="none" />
      <path d="M783 865 780 874 788 886M811 877 803 892 795 912M765 878 779 886 788 884M775 897 787 891M817 904 812 912 818 921M834 919 819 911M833 893 828 904" fill="none" strokeWidth="1.600" />

      {/* upper bar */}
      <path d="M828 845 1110 377 1113 380 1138 339 1160 388 871 902Z" fill="#3f3f3f" strokeWidth="2" />
      <path d="M761 837 1079 340 1112 336 1138 339 1113 380 1110 377 828 845Z" fill="#fff" />
      <path d="M761 837 828 845 871 902 838 897Q820 870 782 864Z" fill="#6e6e6e" />
      <path d="M1087 378 1108 343 1113 338 1138 339 1126 357 1110 377Z" fill="#fff" strokeWidth="1.200" />
      <path d="M1087 378 1109 343 1117 340 1096 377Z" fill="#444" strokeWidth="1" />
      <path d="M1125 362 1127 349 1138 339Z" fill="#444" strokeWidth="1" />
      <path d="M1109 376 1113 381 1116 373Z" fill="#fff" strokeWidth="1" />
    </g>

    {/* left screw */}
    <path d="M994 290 1021 293 1017 357Q1008 378 995 379 988 380 989 365Z" fill="url(#metal)" />
    <path d="M994 290 989 375M1021 293 1017 357" stroke="#000" strokeWidth="1.400" />
    <path d="M988 262Q988 254 1009 254 1029 256 1029 263L1027 293Q1026 299 1020 300L1020 294 995 290 993 297Q987 295 987 289Z" fill="url(#metal)" stroke="#000" strokeWidth="1.600" />
    <path d="M987 288Q1000 282 1027 293 1025 299 1020 299 1020 289 1006 288 995 288 993 297 988 294 987 288Z" fill="#4a4a4a" stroke="#000" />
    <path d="M988 261Q992 253 1009 254 1027 256 1029 263" fill="none" stroke="#000" strokeWidth="2.500" />

    {/* right screw */}
    <path d="M1119 279 1135 281 1126 357Q1120 366 1107 366Z" fill="url(#thinShaft)" />
    <path d="M1119 279 1107 365M1135 281 1126 357" stroke="#000" strokeWidth="1.300" />
    <path d="M1118 247Q1120 243 1132 243 1145 244 1145 248L1141 281Q1127 281 1114 277Z" fill="url(#thin)" stroke="#000" strokeWidth="1.600" />
    <ellipse cx="1131" cy="246" rx="13" ry="3" fill="#ccc" stroke="#000" strokeWidth="1.600" />
  </Scene>
);

/* ---------- taskbar drawings ---------- */

const Wallpaper = () => (
  <TaskbarBackdrop aria-hidden>
    <defs>
      <linearGradient id="slate" x1="0" y1="0" x2="1" y2="0">
        <stop offset="0" stopColor="#747473" />
        <stop offset=".4" stopColor="#777776" />
        <stop offset=".6" stopColor="#74787a" />
        <stop offset="1" stopColor="#727476" />
      </linearGradient>
      <pattern id="planks" x="508" y="0" width="288" height="40" patternUnits="userSpaceOnUse">
        <rect width="288" height="40" fill="url(#slate)" />
        <path d="M112 0 150 40M125 0 172 40M172 0 215 40M197 0 237 40M262 0V40M285 0 280 40" stroke="#5f6468" strokeWidth="1" opacity=".45" />
        <path d="M45 30 60 40M60 12 90 40M140 0 175 35M155 5 185 35" stroke="#84888a" opacity=".5" />
      </pattern>
    </defs>
    <rect width="100%" height="40" fill="url(#planks)" />
    {[222, 512, 802, 1090, 1378, 1666].map((x, i) => (
      <g key={x} transform={`translate(${x} 0)`}>
        <path d={`M0 0H${68 + i * 13}L${28 + i * 9} 40H${i * 2 - 4}Z`} fill="#b9afa3" />
        <path d={`M${60 + i * 12} 0 ${20 + i * 9} 40M4 0 2 40`} stroke="#8f8579" fill="none" />
        <path d="M5 0Q7 12 22 10 32 8 36 0" fill="#a0978d" stroke="#77706a" strokeWidth="2" />
        <path d="M12 0V5M17 0V6M22 0V5" stroke="#6d665f" />
      </g>
    ))}
    <rect width="100%" height="1" fill="#5c5c5c" />
  </TaskbarBackdrop>
);

const menus = ['Archivo', 'Edición', 'Ver', 'Cámara', 'Dibujo', 'Herramientas', 'Ventana', 'Extensiones', 'Ayuda'];
const months = ['E', 'F', 'M', 'A', 'M', 'J', 'J', 'A', 'S', 'O', 'N', 'D'];
const scenes = ['Escena1', 'Escena2', 'Escena3', 'Escena4'];

export default function App() {
  return (
    <Window>
      <GlobalStyle />
      <TitleBar>
        <AppMark>
          <Glyph $size={14} viewBox="0 0 24 24" aria-hidden><LogoMark /></Glyph>
        </AppMark>
        <Title>cañon de particulas  - SketchUp Pro 2018</Title>
        <WindowControls>
          <WindowButton aria-label="Minimizar">
            <Glyph $size={10} viewBox="0 0 10 10"><path d="M1 8H8" stroke="currentColor" strokeWidth="2" /></Glyph>
          </WindowButton>
          <WindowButton aria-label="Restaurar">
            <Glyph $size={10} viewBox="0 0 10 10"><path d="M1 4H7V9H1ZM3 4V1H9V6H7" fill="none" stroke="currentColor" /></Glyph>
          </WindowButton>
          <WindowButton $close aria-label="Cerrar">
            <Glyph $size={8} viewBox="0 0 8 8"><path d="M1 1 7 7M7 1 1 7" stroke="currentColor" strokeWidth="1.500" /></Glyph>
          </WindowButton>
        </WindowControls>
      </TitleBar>

      <MenuBar>
        {menus.map((m) => <MenuItem key={m}>{m}</MenuItem>)}
      </MenuBar>

      <ToolbarRow>
        <Group><Grip /><Tools items={standard} /></Group>
        <Group>
          <Grip />
          <Tools items={[t('shadow', 'Mostrar sombras', true)]} />
          <SliderSet>
            <SliderField>
              <Range type="range" aria-label="Mes" min="0" max="100" defaultValue="86" $track="linear-gradient(90deg,#fffbe6,#f3c33c 30%,#f07a18 45%,#f50808 66%,#f26060 82%,#fbd0d0 90%,#fff)" />
              <Scale $months>{months.map((m, i) => <ScaleMark key={i}>{m}</ScaleMark>)}</Scale>
            </SliderField>
            <SliderField>
              <Range type="range" aria-label="Hora" min="0" max="100" defaultValue="61" $track="linear-gradient(90deg,#fdfeff,#8fb4dc 38%,#6a86e4 58%,#5c70f4 70%,#22287a 88%,#000)" />
              <Scale><span>07:35</span><span>Mediodía</span><span>17:33</span></Scale>
            </SliderField>
          </SliderSet>
        </Group>
        <Group><Grip /><Tools items={styles} /></Group>
        <Group><Grip /><Tools items={location} /></Group>
        <Group><Grip /><Tools items={sandbox} /></Group>
        <Group><Grip /><Tools items={[t('globe', '3D Warehouse')]} /></Group>
      </ToolbarRow>

      <ToolbarRow>
        <Group>
          <Grip />
          <LayerCombo>
            <CheckMark viewBox="0 0 8 8" aria-hidden><path d="M0 4 3 7 8 1" fill="none" stroke="#111" strokeWidth="1.500" /></CheckMark>
            <ComboSelect aria-label="Capa"><option>Layer0</option></ComboSelect>
            <ComboArrow><Chevron /></ComboArrow>
          </LayerCombo>
        </Group>
        <Group>
          <Grip />
          <TypeCombo>
            <ComboSelect aria-label="Tipo"><option>Tipo: &lt;undefined&gt;</option></ComboSelect>
            <ComboArrow $wide><Chevron /></ComboArrow>
          </TypeCombo>
          <Tools items={[t('tags', 'Clasificador')]} />
        </Group>
        <Group><Grip /><Tools items={solids} /></Group>
        <Group><Grip /><Tools items={sections} /></Group>
        <Group><Grip /><Tools items={views} /></Group>
        <Group><Grip /><Tools items={cameras} /></Group>
      </ToolbarRow>

      <SceneTabs>
        {scenes.map((s, i) => <SceneTab key={s} $active={i === 0}>{s}</SceneTab>)}
      </SceneTabs>

      <Body>
        <LeftColumn>
          <Palette>
            <PaletteGrip />
            {paletteSections.map((items, i) => (
              <React.Fragment key={i}>
                {i > 0 && <PaletteDivider />}
                <Tools items={items} />
              </React.Fragment>
            ))}
          </Palette>
        </LeftColumn>
        <Viewport><Model /></Viewport>
        <RightColumn>
          <TrayTab>Bandeja predeterminada</TrayTab>
        </RightColumn>
      </Body>

      <StatusBar>
        <StatusButtons>
          <StatusButton aria-label="Ubicación">
            <Glyph $size={14} viewBox="0 0 14 14">
              <circle cx="7" cy="7" r="6.300" fill="none" stroke="#999" />
              <path d="M7 3A2.300 2.300 0 0 1 9 7L7 11 5 7A2.300 2.300 0 0 1 7 3Z" fill="#999" />
            </Glyph>
          </StatusButton>
          <StatusButton aria-label="Créditos">
            <Glyph $size={14} viewBox="0 0 14 14">
              <circle cx="7" cy="7" r="6" fill="none" stroke="#111" strokeWidth="1.500" />
              <circle cx="7" cy="3.500" r="1.300" />
              <path d="M5 5.500H9V8H8V11.500H6V8H5Z" />
            </Glyph>
          </StatusButton>
          <StatusButton aria-label="Cuenta">
            <Glyph $size={14} viewBox="0 0 14 14">
              <circle cx="7" cy="7" r="6.300" fill="#ccc" stroke="#888" />
              <circle cx="7" cy="5" r="2.500" fill="#888" />
              <path d="M2.500 11Q3 8 7 8T11.500 11Q7 14.500 2.500 11Z" fill="#888" />
            </Glyph>
          </StatusButton>
        </StatusButtons>
        <StatusDivider />
        <Hint>Seleccionar tipo</Hint>
        <StatusDivider />
        <Measure>Medidas<MeasureInput type="text" /></Measure>
      </StatusBar>

      <Taskbar>
        <Wallpaper />
        <StartButton aria-label="Inicio">
          <Glyph $size={26} viewBox="0 0 26 26">
            <path d="M0 4 11 2V12.500H0ZM12 2 26 0V12.500H12ZM0 13.500H11V24L0 22ZM12 13.500H26V26L12 24Z" fill="#fff" />
          </Glyph>
        </StartButton>
        <TaskList>
          <TaskButton aria-label="Explorador de archivos">
            <Glyph $size={32} viewBox="0 0 32 32">
              <path d="M2 4H12L14 7H30V27H2Z" fill="#e3c55c" stroke="#b8983c" />
              <path d="M4 2H10V6H4ZM13 4H20V8H13ZM21 6H28V9H21Z" fill="#fff" />
              <path d="M4 2H7V4H4Z" fill="#3a9b3a" /><path d="M13 4H17V6H13Z" fill="#c94b3a" /><path d="M21 6H25V8H21Z" fill="#3c88d0" />
              <path d="M1 9H12L14 7H31V27H1Z" fill="#f5e08c" />
              <path d="M5 29V20Q5 18 8 18H24Q28 18 28 20V29H23V23H10V29Z" fill="#9bd3ee" stroke="#4d9cc6" />
            </Glyph>
          </TaskButton>
          <TaskButton aria-label="Google Chrome">
            <Glyph $size={30} viewBox="0 0 30 30">
              <circle cx="15" cy="15" r="15" fill="#fbc93a" />
              <path d="M2 7.500A15 15 0 0 1 28 7.500H15L8.500 18.700Z" fill="#dd4b3e" />
              <path d="M2 7.500 8.500 18.700 15 22.500H17L13.500 30A15 15 0 0 1 2 7.500Z" fill="#1e9e57" />
              <circle cx="15" cy="15" r="7" fill="#fff" />
              <circle cx="15" cy="15" r="5.500" fill="#4a8af4" />
            </Glyph>
          </TaskButton>
          <TaskButton aria-label="Monitor">
            <Glyph $size={32} viewBox="0 0 32 32">
              <path d="M2 1H30V26L31 31H1L2 26Z" fill="#dfe3e6" stroke="#8d959b" />
              <path d="M4 3H28V25H4Z" fill="#505254" />
              <path d="M7 8H16V24H7Z" fill="#148be0" /><path d="M7 8H10V24H7Z" fill="#0c5ea2" />
              <path d="M21 27H27V29H21Z" fill="#59a0d8" />
            </Glyph>
          </TaskButton>
          <TaskButton $active aria-label="SketchUp">
            <Glyph $size={30} viewBox="0 0 30 30">
              <path d="M2 3 18 1 28 7 26 24 9 29 5 17Z" fill="#e02025" />
              <path d="M5 5 18 4 26 9 23 11 16 8 7 9ZM6 13 13 12 18 15 17 18 12 16 7 17ZM9 21 15 20 17 22 15 24 10 25Z" fill="#fff" />
            </Glyph>
          </TaskButton>
        </TaskList>
        <Tray>
          <TrayButton aria-label="Mostrar iconos ocultos">
            <Glyph $size={10} viewBox="0 0 10 10"><path d="M1 7 5 3 9 7Z" fill="#fff" /></Glyph>
          </TrayButton>
          <TrayButton aria-label="Red">
            <Glyph $size={16} viewBox="0 0 16 16"><path d="M2 14V11M5 14V9M8 14V7M11 14V5M14 14V2" stroke="#fff" strokeWidth="2" /></Glyph>
          </TrayButton>
          <TrayButton aria-label="Centro de actividades">
            <Glyph $size={16} viewBox="0 0 16 16">
              <path d="M2 0V15" stroke="#fff" strokeWidth="1.500" /><path d="M3 1 9 2 14 3V9L3 8Z" fill="#fff" />
              <circle cx="11" cy="10.500" r="4.500" fill="#d8232a" />
              <path d="M9 8.500 13 12.500M13 8.500 9 12.500" stroke="#fff" strokeWidth="1.500" />
            </Glyph>
          </TrayButton>
          <TrayButton aria-label="Volumen">
            <Glyph $size={16} viewBox="0 0 16 16">
              <path d="M1 5H3L7 1V15L3 11H1Z" fill="#fff" />
              <path d="M9 5Q11 8 9 11M11 3Q14 8 11 13M13 2Q17 8 13 14" fill="none" stroke="#fff" />
            </Glyph>
          </TrayButton>
        </Tray>
        <Clock>05:58 p.m.<br />05-10-2019</Clock>
      </Taskbar>
    </Window>
  );
}
